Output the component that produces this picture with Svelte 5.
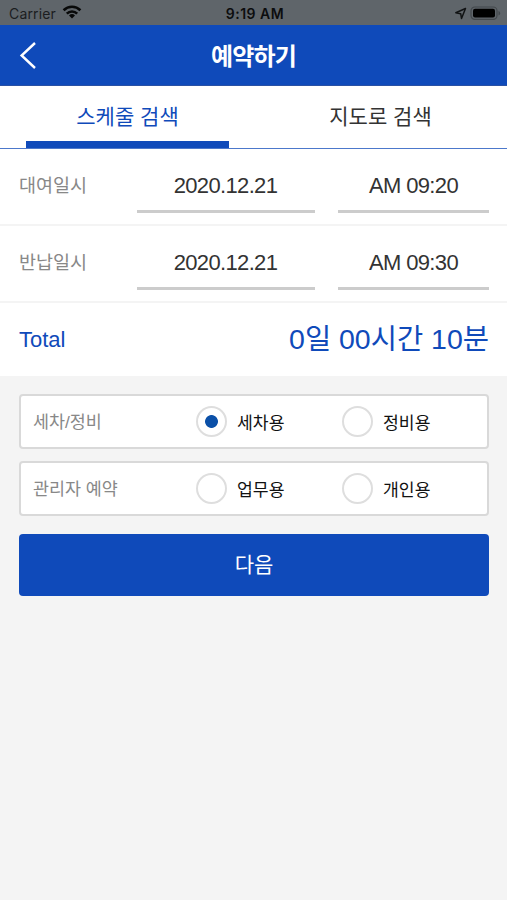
<script>
    const tabs = ['스케줄 검색', '지도로 검색'];

    const schedules = [
        { label: '대여일시', date: '2020.12.21', time: 'AM 09:20' },
        { label: '반납일시', date: '2020.12.21', time: 'AM 09:30' }
    ];

    const groups = [
        { id: 'service', label: '세차/정비', options: ['세차용', '정비용'] },
        { id: 'manager', label: '관리자 예약', options: ['업무용', '개인용'] }
    ];

    let activeTab = $state(0);
    let selected = $state({ service: '세차용', manager: '' });
</script>

<div class="app">
    <div class="status-bar">
        <div class="carrier">
            <span>Carrier</span>
            <svg width="20" height="14" viewBox="0 0 20 14" fill="none" stroke="#080909" stroke-width="2.6">
                <path d="M1.6 5.2a12 12 0 0 1 16.8 0"></path>
                <path d="M4.8 8.6a7.4 7.4 0 0 1 10.4 0"></path>
                <path d="M10 13.6l-3-3.1a4.3 4.3 0 0 1 6 0z" fill="#080909" stroke="none"></path>
            </svg>
        </div>
        <span class="clock">9:19 AM</span>
        <div class="indicators">
            <svg width="13" height="13" viewBox="0 0 13 13" fill="none" stroke="#111314" stroke-width="1.5" stroke-linejoin="round">
                <path d="M11.5 1.5L1.8 5.8l4.9.9.8 4.8z"></path>
            </svg>
            <svg width="31" height="15" viewBox="0 0 31 15">
                <rect x="1" y="1" width="26" height="12.4" rx="3.8" fill="none" stroke="#43484c" stroke-width="1.2"></rect>
                <rect x="3" y="2.8" width="22" height="8.8" rx="2" fill="#000"></rect>
                <path d="M28.5 5a2.3 2.3 0 0 1 0 4.4z" fill="#43484c"></path>
            </svg>
        </div>
    </div>

    <header class="header">
        <button class="back" aria-label="뒤로">
            <svg width="18" height="28" viewBox="0 0 18 28" fill="none" stroke="#fff" stroke-width="2.4">
                <path d="M16 2L2.6 14.5L16 27"></path>
            </svg>
        </button>
        <h1>예약하기</h1>
    </header>

    <div class="tabs">
        {#each tabs as tab, i (tab)}
            <button class="tab" class:active={activeTab === i} onclick={() => (activeTab = i)}>{tab}</button>
        {/each}
    </div>

    <section class="schedule">
        {#each schedules as row (row.label)}
            <div class="row">
                <span class="row-label">{row.label}</span>
                <span class="field date">{row.date}</span>
                <span class="field time">{row.time}</span>
            </div>
        {/each}
        <div class="total">
            <span class="total-label">Total</span>
            <span class="total-value">0일 00시간 10분</span>
        </div>
    </section>

    <section class="options">
        {#each groups as group (group.id)}
            <div class="group">
                <span class="group-label">{group.label}</span>
                {#each group.options as option (option)}
                    <label class="option">
                        <input type="radio" name={group.id} value={option} bind:group={selected[group.id]} />
                        <span>{option}</span>
                    </label>
                {/each}
            </div>
        {/each}
        <button class="next">다음</button>
    </section>
</div>

<style>
    :global(body) {
        background: #f4f4f4;
    }

    .app {
        min-height: 100vh;
        background: #f4f4f4;
        color: #333;
        font-family: 'Liberation Sans', 'Noto Sans CJK KR', sans-serif;
    }

    .app * {
        box-sizing: border-box;
    }

    button {
        border: none;
        background: none;
        padding: 0;
        font-family: inherit;
        cursor: pointer;
    }

    .status-bar {
        display: grid;
        grid-template-columns: 1fr auto 1fr;
        align-items: center;
        height: 25px;
        padding: 2px 6px 0 9px;
        background: #5f656a;
        color: #1b1d1f;
        font-family: Inter, sans-serif;
        font-size: 14px;
        letter-spacing: 0.15px;
    }

    .carrier,
    .indicators {
        display: flex;
        align-items: center;
        gap: 6px;
    }

    .carrier svg {
        margin-top: -3px;
    }

    .indicators {
        justify-content: flex-end;
        gap: 3px;
    }

    .clock {
        color: #0c0d0e;
        font-weight: 600;
        letter-spacing: 0.5px;
    }

    .header {
        display: grid;
        grid-template-columns: 60px 1fr 60px;
        align-items: center;
        height: 61px;
        background: #0f4aba;
        border-bottom: 1px solid #2a51a4;
    }

    .back {
        display: flex;
        padding-left: 19px;
    }

    h1 {
        margin: 0;
        padding-top: 4px;
        color: #fff;
        font-size: 24px;
        font-weight: 700;
        letter-spacing: -0.8px;
        line-height: 34px;
        text-align: center;
    }

    .tabs {
        display: grid;
        grid-template-columns: 1fr 1fr;
        height: 63px;
        padding: 0 0 0 1px;
        background: #fff;
        border-bottom: 1px solid #4c78cb;
    }

    .tab {
        height: 62px;
        margin: 0 25px;
        padding-top: 3px;
        border-bottom: 7px solid transparent;
        color: #333;
        font-size: 21px;
        font-weight: 400;
    }

    .tab.active {
        border-bottom-color: #0f4aba;
        color: #0f4aba;
    }

    .schedule {
        background: #fff;
    }

    .row {
        display: grid;
        grid-template-columns: 118px 178px 151px;
        height: 77px;
        padding: 11px 18px 0 19px;
        border-bottom: 2px solid #f4f4f4;
    }

    .row-label {
        color: #888;
        font-size: 18.5px;
        line-height: 52px;
    }

    .field {
        height: 53px;
        border-bottom: 3px solid #ccc;
        font-size: 22px;
        letter-spacing: -0.65px;
        line-height: 51px;
        text-align: center;
    }

    .date {
        padding-right: 1px;
    }

    .time {
        width: 151px;
        margin-left: 23px;
    }

    .total {
        display: flex;
        align-items: center;
        justify-content: space-between;
        height: 73px;
        padding: 0 18px 0 19px;
        color: #0f4aba;
    }

    .total-label {
        font-size: 22px;
    }

    .total-value {
        padding-bottom: 7px;
        font-size: 28.5px;
    }

    .options {
        display: flex;
        flex-direction: column;
        gap: 12px;
        padding: 18px 18px 0 19px;
    }

    .group {
        display: grid;
        grid-template-columns: 163px 146px 1fr;
        align-items: center;
        height: 55px;
        padding-left: 12px;
        background: #fff;
        border: 2px solid #d9d9d9;
        border-radius: 4px;
    }

    .group-label {
        padding-bottom: 2px;
        color: #888;
        font-size: 17.4px;
    }

    .option {
        display: flex;
        align-items: center;
        gap: 10px;
        color: #111;
        font-size: 17.2px;
        font-weight: 400;
    }

    .option span {
        padding-bottom: 1px;
    }

    .option input {
        appearance: none;
        width: 31px;
        height: 31px;
        margin: 0;
        background: #fff;
        border: 2px solid #dedede;
        border-radius: 50%;
    }

    .option input:checked {
        background: radial-gradient(circle, #0b50a8 6px, #fff 6.8px);
    }

    .next {
        height: 62px;
        margin-top: 6px;
        padding-bottom: 4px;
        background: #0f4aba;
        border-radius: 4px;
        color: #fff;
        font-size: 21px;
    }
</style>
